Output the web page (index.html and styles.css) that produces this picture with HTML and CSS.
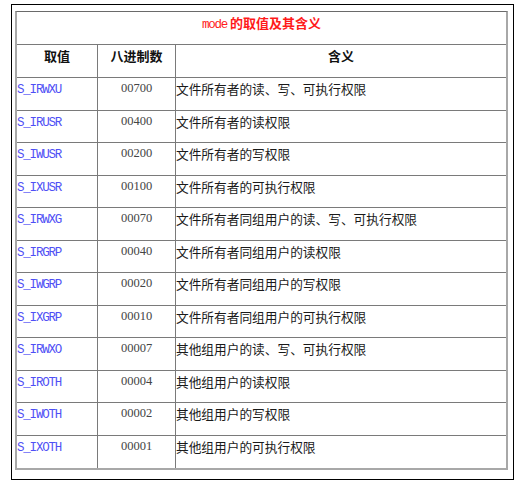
FILE: index.html
```html
<!DOCTYPE html>
<html lang="zh">
<head>
<meta charset="utf-8">
<title>mode 的取值及其含义</title>
<link rel="stylesheet" href="styles.css">
</head>
<body>
<div class="frame">
  <table class="modes">
    <colgroup><col class="c1"><col class="c2"><col class="c3"></colgroup>
    <tr class="title-row"><td colspan="3" class="title"><span class="mono">mode</span> 的取值及其含义</td></tr>
    <tr class="head-row"><th>取值</th><th>八进制数</th><th>含义</th></tr>
    <tr><td class="code">S_IRWXU</td><td class="num">00700</td><td class="desc">文件所有者的读、写、可执行权限</td></tr>
    <tr><td class="code">S_IRUSR</td><td class="num">00400</td><td class="desc">文件所有者的读权限</td></tr>
    <tr><td class="code">S_IWUSR</td><td class="num">00200</td><td class="desc">文件所有者的写权限</td></tr>
    <tr><td class="code">S_IXUSR</td><td class="num">00100</td><td class="desc">文件所有者的可执行权限</td></tr>
    <tr><td class="code">S_IRWXG</td><td class="num">00070</td><td class="desc">文件所有者同组用户的读、写、可执行权限</td></tr>
    <tr><td class="code">S_IRGRP</td><td class="num">00040</td><td class="desc">文件所有者同组用户的读权限</td></tr>
    <tr><td class="code">S_IWGRP</td><td class="num">00020</td><td class="desc">文件所有者同组用户的写权限</td></tr>
    <tr><td class="code">S_IXGRP</td><td class="num">00010</td><td class="desc">文件所有者同组用户的可执行权限</td></tr>
    <tr><td class="code">S_IRWXO</td><td class="num">00007</td><td class="desc">其他组用户的读、写、可执行权限</td></tr>
    <tr><td class="code">S_IROTH</td><td class="num">00004</td><td class="desc">其他组用户的读权限</td></tr>
    <tr><td class="code">S_IWOTH</td><td class="num">00002</td><td class="desc">其他组用户的写权限</td></tr>
    <tr><td class="code">S_IXOTH</td><td class="num">00001</td><td class="desc">其他组用户的可执行权限</td></tr>
  </table>
</div>
</body>
</html>
```
FILE: styles.css
```css
html, body {
  margin: 0;
  padding: 0;
  background: #fff;
}
body {
  font-family: "Noto Sans CJK SC", "Noto Sans", sans-serif;
  color: #111;
}
.frame {
  box-sizing: border-box;
  width: 503px;
  height: 476px;
  margin: 4px 0 0 11px;
  border: 1px solid #000;
  padding: 6px 0 0 3px;
}
.modes {
  box-sizing: border-box;
  width: 493px;
  table-layout: fixed;
  border-spacing: 0;
  border-top: 1px solid #6a6a6a;
  border-left: 2px solid #a8a8a8;
  border-right: 2px solid #a8a8a8;
  border-bottom: 2px solid #a8a8a8;
}
.c1 { width: 81px; }
.c2 { width: 78px; }
.c3 { width: 330px; }
.modes td, .modes th {
  box-sizing: border-box;
  padding: 2px 0 0 0;
  vertical-align: top;
  line-height: 17px;
  border-bottom: 1px solid #7a7a7a;
  border-right: 1px solid #7a7a7a;
  height: 32.5px;
  white-space: nowrap;
  overflow: hidden;
}
.modes td:last-child, .modes th:last-child {
  border-right: none;
}
.modes tr:last-child td {
  border-bottom: none;
}
.title-row td, .head-row th {
  height: 33px;
}
.title {
  text-align: center;
  color: #ff1a1a;
  font-weight: bold;
  font-size: 13px;
}
.mono {
  font-family: "Liberation Mono", monospace;
  font-weight: normal;
  font-size: 12.5px;
  letter-spacing: -1.2px;
}
.head-row th {
  font-weight: bold;
  font-size: 13px;
  text-align: center;
  color: #111;
}
.code {
  font-family: "Liberation Mono", monospace;
  font-size: 12.5px;
  letter-spacing: -1.2px;
  color: #4f4ff5;
  text-align: left;
}
.modes td.code {
  padding-top: 4px;
}
.num {
  font-family: "Liberation Serif", serif;
  font-size: 12.5px;
  color: #444;
  text-align: center;
}
.desc {
  font-size: 12.7px;
  color: #1a1a1a;
  text-align: left;
}
```
